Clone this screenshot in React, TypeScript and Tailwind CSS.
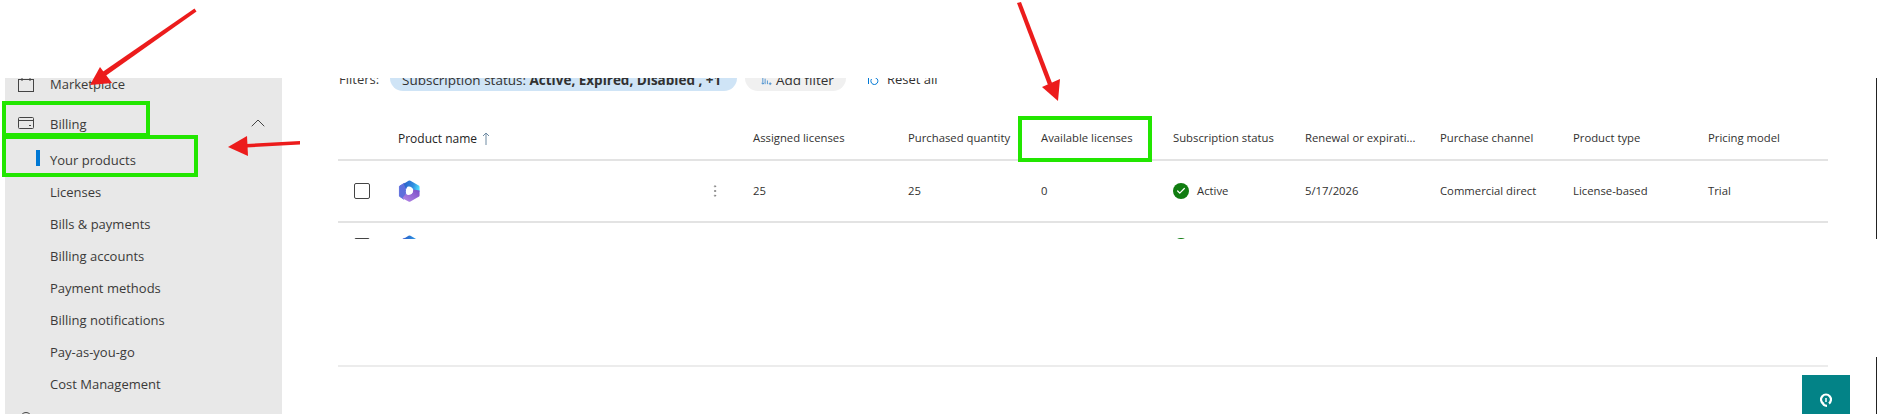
import React from 'react';
import { ChevronUp, MoreVertical, Check } from 'lucide-react';

const SUB_ITEMS = ['Licenses', 'Bills & payments', 'Billing accounts', 'Payment methods', 'Billing notifications', 'Pay-as-you-go', 'Cost Management'];
const GRID = 'grid grid-cols-[60px_355px_155px_133px_132px_132px_135px_133px_135px_90px]';

function ProductLogo() {
  return (
    <svg viewBox="0 0 24 24" className="w-[23px] h-[24px] shrink-0">
      <defs>
        <linearGradient id="m365a" x1="0" y1="0.300" x2="1" y2="0.500">
          <stop offset="0" stopColor="#2a5fc8" />
          <stop offset="0.600" stopColor="#2f8fe0" />
          <stop offset="1" stopColor="#4fdcfc" />
        </linearGradient>
        <linearGradient id="m365b" x1="0" y1="1" x2="1" y2="0">
          <stop offset="0" stopColor="#b68ae6" />
          <stop offset="1" stopColor="#7a4cc8" />
        </linearGradient>
      </defs>
      <path d="M1.500 7 L6.500 4 L9 8 C7 11 7.500 15 9 17 L6 20.500 L1.500 17.500 Z" fill="#5f6fdc" stroke="#5f6fdc" strokeLinejoin="round" />
      <path d="M6 4.500 L11 1.300 Q12 0.800 13 1.300 L22 6.500 Q22.500 7 22.500 8 V13 L16 11 C15 7 10 6 8 9.500 Z" fill="url(#m365a)" />
      <path d="M22.500 11.500 V16.500 Q22.500 17.500 22 17.800 L13 23 Q12 23.400 11 23 L4.500 19.500 L8 15 C11 17.500 15.500 16 16 10.500 Z" fill="url(#m365b)" />
      <circle cx="12" cy="12" r="3.500" fill="#fff" />
    </svg>
  );
}

function Annotations() {
  return (
    <svg className="absolute left-0 top-0 w-[1886px] h-[414px] pointer-events-none" viewBox="0 0 1886 414">
      <g fill="none" stroke="#22e600" strokeWidth="4">
        <rect x="4" y="103" width="144" height="32" />
        <rect x="4" y="137" width="192" height="38" />
        <rect x="1020" y="118" width="130" height="42" />
      </g>
      <g fill="#ec1c1c" stroke="none">
        <path d="M194.500 8.500 L196.500 11.500 L104 77 L101 73 Z" />
        <path d="M90 85 L100 67 L112 83 Z" />
        <path d="M300 141 L300 144.500 L246 147.500 L246 144 Z" />
        <path d="M228 147 L247 136 L248 156 Z" />
        <path d="M1017 3 L1021 2 L1052 83 L1048 85 Z" />
        <path d="M1058 101 L1042 87 L1060 79 Z" />
      </g>
    </svg>
  );
}

export default function App() {
  return (
    <div className="relative w-[1886px] h-[414px] overflow-hidden bg-white text-[#323130] font-['Open_Sans','Noto_Sans',sans-serif]">
      <div className="flex h-full pt-[78px] pl-[5px]">
        <nav className="w-[277px] shrink-0 bg-[#e8e8e8] text-[13px] text-[#3b3a39] overflow-hidden">
          <div className="flex items-center h-[32px] -mt-[10px] mb-[8px]">
            <svg viewBox="0 0 16 14" className="ml-[13px] w-[16px] h-[14px] mt-[2px]" fill="none" stroke="#444" strokeWidth="1">
              <rect x="0.500" y="1.500" width="15" height="12" />
              <path d="M4 0v3M12 0v3" />
            </svg>
            <span className="ml-[16px] pt-[2px]">Marketplace</span>
          </div>
          <div className="flex items-center h-[32px]">
            <svg viewBox="0 0 16 12" className="ml-[13px] w-[16px] h-[12px] -mt-[3px]" fill="none" stroke="#444" strokeWidth="1">
              <rect x="0.500" y="0.500" width="15" height="11" rx="1" />
              <path d="M0.500 3.500h15M11 8.500h2" />
            </svg>
            <span className="ml-[16px] pt-[2px]">Billing</span>
            <ChevronUp className="ml-auto mr-[12px] w-[24px] h-[24px] -mt-[2px] text-[#444]" strokeWidth={1} />
          </div>
          <div className="flex items-center h-[32px] mt-[4px]">
            <span className="ml-[31px] w-[4px] h-[16px] -mt-[4px] bg-[#0078d4]" />
            <span className="ml-[10px] pt-[2px]">Your products</span>
          </div>
          {SUB_ITEMS.map((item) => (
            <div key={item} className="flex items-center h-[32px] pl-[45px] pt-[2px]">{item}</div>
          ))}
          <div className="h-[14px] pl-[15px] mt-[12px]">
            <span className="block w-[12px] h-[12px] rounded-full border border-[#444]" />
          </div>
        </nav>

        <main className="flex-1 overflow-hidden">
          <div className="flex items-center h-[26px] -mt-[13px] ml-[57px] text-[13px]">
            <span className="w-[39px] pt-[4px] text-[#3b3a39]">Filters:</span>
            <span className="ml-[12px] flex items-center h-[26px] w-[347px] rounded-b-[13px] bg-[#cfe4f6] pl-[12px] pt-[4px] text-[13.500px] whitespace-nowrap">
              Subscription status:&nbsp;<b>Active, Expired, Disabled , +1</b>
            </span>
            <span className="ml-[8px] flex items-center h-[26px] w-[101px] rounded-b-[13px] bg-[#f0f0f0] pl-[16px] pt-[4px] text-[13.500px]">
              <svg viewBox="0 0 12 12" className="w-[11px] h-[11px] mr-[4px]" fill="none" stroke="#4a90d0" strokeWidth="1">
                <path d="M2 1v9M4.500 4v6M7 6v4M2 10l-1.500-1.500M2 10l1.500-1.500M10 8v3M8.500 9.500h3" />
              </svg>
              Add filter
            </span>
            <span className="ml-[21px] flex items-center pt-[4px] text-[13px]">
              <svg viewBox="0 0 12 12" className="w-[12px] h-[12px] mr-[8px]" fill="none" stroke="#0078d4" strokeWidth="1">
                <path d="M1.500 2v8M7.500 3.500a3.500 3.500 0 1 1 -3 1.500M4 3h3.500v-2" />
              </svg>
              Reset all
            </span>
          </div>

          <div className="ml-[56px] w-[1490px] mt-[27px] text-[11.300px]">
            <div className={`${GRID} items-center h-[43px] border-b-2 border-[#e3e3e3]`}>
              <span />
              <span className="flex items-center text-[12px] font-medium text-[#242424]">
                Product name
                <svg viewBox="0 0 8 13" className="ml-[5px] w-[8px] h-[13px]" fill="none" stroke="#6f8ba3" strokeWidth="1">
                  <path d="M4 13V1M1 4l3-3 3 3" />
                </svg>
              </span>
              <span>Assigned licenses</span>
              <span>Purchased quantity</span>
              <span>Available licenses</span>
              <span>Subscription status</span>
              <span className="truncate">Renewal or expirati...</span>
              <span>Purchase channel</span>
              <span>Product type</span>
              <span>Pricing model</span>
            </div>
            <div className={`${GRID} items-center h-[62px] border-b-2 border-[#e3e3e3]`}>
              <span className="ml-[16px] w-[16px] h-[16px] rounded-[2px] border border-[#444]" />
              <span className="relative flex items-center">
                <ProductLogo />
                <MoreVertical className="absolute left-[309px] top-[4px] w-[16px] h-[16px] text-[#888]" strokeWidth={1.500} />
              </span>
              <span>25</span>
              <span>25</span>
              <span>0</span>
              <span className="flex items-center">
                <span className="flex items-center justify-center w-[16px] h-[16px] rounded-full bg-[#107c10] mr-[8px]">
                  <Check className="w-[10px] h-[10px] text-white" strokeWidth={3} />
                </span>
                Active
              </span>
              <span>5/17/2026</span>
              <span>Commercial direct</span>
              <span>License-based</span>
              <span>Trial</span>
            </div>
            <div className={`${GRID} items-start h-[16px] overflow-hidden`}>
              <span className="ml-[16px] w-[16px] h-[16px] mt-[15px] rounded-[2px] border border-[#444]" />
              <span className="block mt-[11px]"><ProductLogo /></span>
              <span /><span /><span />
              <span className="mt-[15px] w-[16px] h-[16px] rounded-full bg-[#107c10]" />
            </div>
            <div className="mt-[126px] border-t-2 border-[#ececec]" />
          </div>
        </main>
      </div>

      <div className="absolute left-[1802px] top-[375px] w-[48px] h-[48px] bg-[#038387] flex items-center justify-center">
        <svg viewBox="0 0 12 15" className="w-[12px] h-[15px]" fill="none" stroke="#fff" strokeWidth="2.200">
          <path d="M3 11.500a5 5 0 1 1 6 0" />
          <path d="M3 10.500c0 2 1.500 3.300 4 3.300" />
          <path d="M6 6v4" strokeWidth="1.500" />
        </svg>
      </div>
      <div className="absolute left-[1876px] top-[78px] w-[1px] h-[161px] bg-[#222]" />
      <div className="absolute left-[1876px] top-[357px] w-[1px] h-[57px] bg-[#222]" />
      <Annotations />
    </div>
  );
}
